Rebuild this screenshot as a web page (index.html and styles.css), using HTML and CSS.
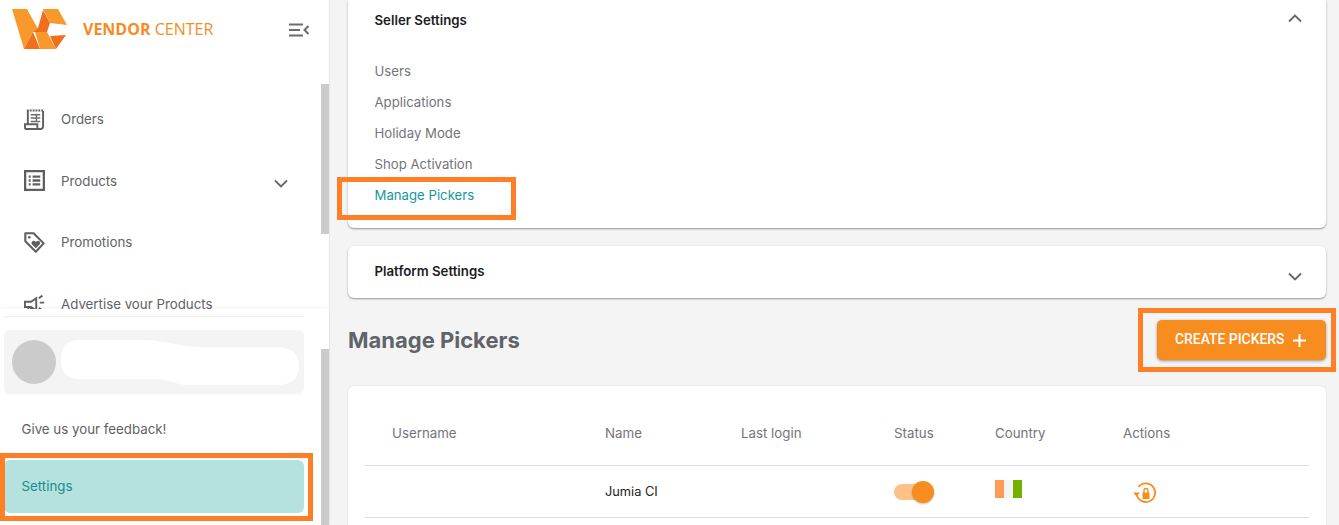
FILE: index.html
```html
<!DOCTYPE html>
<html lang="en">
<head>
<meta charset="utf-8">
<title>Vendor Center</title>
<link rel="stylesheet" href="styles.css">
</head>
<body>
<div class="app">
  <aside class="sidebar">
    <div class="brand">
      <svg class="logo" viewBox="0 0 55 40" aria-hidden="true">
        <polygon fill="#f8992c" points="0,0 15,0 26,20 21,23 12,40"/>
        <polygon fill="#f06f1a" points="21,23 12,40 28,40"/>
        <polygon fill="#f8992c" points="23,23 35,23 44,40 28,40"/>
        <polygon fill="#f06f1a" points="31,1 38,14 35,23 21,23 26,19"/>
        <polygon fill="#f8992c" points="31,0 46,0 55,16 38,14"/>
        <polygon fill="#f06f1a" points="38,27 54,26 44,40"/>
      </svg>
      <span class="brand-name"><b>VENDOR</b> CENTER</span>
      <svg class="collapse" viewBox="0 0 20 14" aria-hidden="true">
        <path d="M0 1.500h14M0 7h11M0 12.500h14M19.500 3l-4 4 4 4" fill="none" stroke="#6b6b6b" stroke-width="2"/>
      </svg>
    </div>
    <nav class="nav">
      <a class="nav-item">
        <svg class="nav-icon" viewBox="0 0 22 22"><path d="M4 2v14M20 2v16a3 3 0 0 1-3 3H3a2 2 0 0 1-2-2v-3h13v3a2 2 0 0 0 2 2" fill="none" stroke="#5f5f5f" stroke-width="2"/><path d="M3 1.500h18" fill="none" stroke="#5f5f5f" stroke-width="2" stroke-dasharray="2 1"/><path d="M7 6h10M7 9.500h10M7 13h10M13 5v9" fill="none" stroke="#6d6d6d" stroke-width="1.500"/></svg>
        <span>Orders</span>
      </a>
      <a class="nav-item">
        <svg class="nav-icon" viewBox="0 0 22 22"><path d="M1.200 1.200h19.600v19.600H1.200zM9 7h8M9 11h8M9 15h8M5 7h2M5 11h2M5 15h2" fill="none" stroke="#5f5f5f" stroke-width="2.400"/></svg>
        <span>Products</span>
        <svg class="chevron chevron-nav" viewBox="0 0 14 9"><path d="M1 1.500l6 6 6-6" fill="none" stroke="#666" stroke-width="1.800"/></svg>
      </a>
      <a class="nav-item">
        <svg class="nav-icon" viewBox="0 0 24 24"><path d="M1.500 1.500h9.500l11.500 11.500-9 9.500L1.500 10.500z" fill="none" stroke="#5f5f5f" stroke-width="2.400" stroke-linejoin="round"/><circle cx="6" cy="6" r="1.500" fill="#5f5f5f"/><path d="M13.500 18.500l-4.500-4.500a2.500 2.500 0 0 1 3.500-3.500l1 1 1-1a2.500 2.500 0 0 1 3.500 3.500z" fill="#5f5f5f"/></svg>
        <span>Promotions</span>
      </a>
      <a class="nav-item">
        <svg class="nav-icon" viewBox="0 0 24 22"><path d="M1 9h7l6-4v14l-6-4H1zM5 15v5h3v-5M18 10h5M17 5l4-3M17 16l4 3" fill="none" stroke="#5f5f5f" stroke-width="2.200"/></svg>
        <span>Advertise your Products</span>
      </a>
    </nav>
    <div class="sidebar-foot">
      <div class="foot-rule"></div>
      <div class="user">
        <span class="avatar"></span>
        <svg class="user-name" viewBox="0 0 238 45" aria-hidden="true"><path d="M18 0H80C100 0 120 7 140 7H215Q238 7 238 26Q238 45 215 45H130C110 45 115 39 90 39H18Q0 39 0 19Q0 0 18 0Z" fill="#fff"/></svg>
      </div>
      <a class="foot-link">Give us your feedback!</a>
      <a class="foot-link foot-link-active">Settings</a>
    </div>
    <span class="thumb thumb-top"></span>
    <span class="thumb thumb-bottom"></span>
    <span class="mark mark-settings"></span>
  </aside>

  <main class="main">
    <section class="card seller">
      <header class="card-head">
        <h2>Seller Settings</h2>
        <svg class="chevron chevron-up" viewBox="0 0 14 9"><path d="M1 7.500l6-6 6 6" fill="none" stroke="#666" stroke-width="1.800"/></svg>
      </header>
      <ul class="links">
        <li>Users</li>
        <li>Applications</li>
        <li>Holiday Mode</li>
        <li>Shop Activation</li>
        <li class="link-active">Manage Pickers</li>
      </ul>
    </section>
    <section class="card platform">
      <header class="card-head">
        <h2>Platform Settings</h2>
        <svg class="chevron" viewBox="0 0 14 9"><path d="M1 1.500l6 6 6-6" fill="none" stroke="#666" stroke-width="1.800"/></svg>
      </header>
    </section>
    <div class="title-row">
      <h1>Manage Pickers</h1>
      <button class="create">CREATE PICKERS
        <svg class="plus" viewBox="0 0 13 13"><path d="M6.500 0v13M0 6.500h13" stroke="#fff" stroke-width="2"/></svg>
      </button>
    </div>
    <section class="card table-card">
      <div class="row row-head">
        <span>Username</span><span>Name</span><span>Last login</span><span>Status</span><span>Country</span><span>Actions</span>
      </div>
      <div class="row row-body">
        <span></span>
        <span class="cell-name">Jumia CI</span>
        <span></span>
        <span><span class="toggle"><span class="knob"></span></span></span>
        <span class="flag"><i class="f-o"></i><i class="f-w"></i><i class="f-g"></i></span>
        <span class="action">
          <svg viewBox="0 0 24 22"><path d="M6.500 5A9.300 9.300 0 1 1 4.800 13" fill="none" stroke="#f78d1e" stroke-width="1.800"/><path d="M1 10.500h7L4.500 14.500z" fill="#f78d1e"/><path d="M10.500 10.500h7v6.500h-7z" fill="#f78d1e"/><path d="M12 11V8.500a2 2 0 0 1 4 0V11" fill="none" stroke="#f78d1e" stroke-width="1.400"/></svg>
        </span>
      </div>
    </section>
    <span class="mark mark-link"></span>
    <span class="mark mark-button"></span>
  </main>
</div>
</body>
</html>
```

FILE: styles.css
```css
* { box-sizing: border-box; }
html, body { margin: 0; height: 525px; overflow: hidden; }
body { font-family: Inter, "Liberation Sans", sans-serif; font-size: 13.300px; color: #5f6368; background: #f4f4f4; }
.app { display: flex; height: 525px; }

.sidebar { position: relative; flex: 0 0 330px; height: 525px; background: #fff; display: flex; flex-direction: column; border-right: 1px solid #e8e8e8; }
.brand { flex: 0 0 58px; display: flex; align-items: center; padding: 0 0 0 12px; }
.logo { width: 55px; height: 40px; }
.brand-name { margin-left: 16px; font-family: "Open Sans", sans-serif; font-size: 16px; color: #f68b1f; }
.brand-name b { font-weight: 700; }
.collapse { width: 20px; height: 14px; margin-left: 76px; margin-top: 2px; }

.nav { flex: 0 0 251px; overflow: hidden; padding-top: 30.300px; }
.nav-item { display: flex; align-items: center; height: 61.500px; padding-left: 24px; padding-right: 41px; }
.nav-item span { flex: 1; margin-left: 16px; }
.nav-icon { width: 21px; height: 21px; flex: none; }
.chevron { width: 14px; height: 9px; flex: none; }
.chevron-nav { margin-top: 5px; }

.sidebar-foot { flex: 1; padding: 7px 25px 0 4px; box-shadow: 0 -2px 3px rgba(0,0,0,.03); position: relative; background: #fff; }
.foot-rule { height: 1px; background: #ececec; }
.user { height: 64px; margin-top: 13px; background: #f4f4f4; border-radius: 6px; display: flex; align-items: center; padding: 0 5px 0 8px; }
.avatar { width: 44px; height: 44px; border-radius: 50%; background: #cbcbcb; flex: none; }
.user-name { flex: 1; min-width: 0; height: 45px; margin-left: 5px; }
.foot-link { display: flex; align-items: center; height: 53px; margin-top: 9px; padding: 0 0 2px 17.500px; color: #5f5f5f; }
.foot-link-active { margin-top: 4px; background: #b5e1df; color: #14908e; border-radius: 6px; }

.thumb { position: absolute; right: 0; width: 8px; background: #cbcbcb; }
.thumb-top { top: 84px; height: 150px; }
.thumb-bottom { top: 349px; bottom: 0; }

.mark { position: absolute; border: 5px solid #ff7f27; pointer-events: none; }
.mark-settings { left: 0; top: 453px; width: 313px; height: 68px; }
.mark-link { left: 337px; top: 177px; width: 179px; height: 43px; }
.mark-button { left: 1138px; top: 308px; width: 198px; height: 64px; }

.main { flex: 1; min-width: 0; padding: 0 13px 0 18px; }
.card { background: #fff; border-radius: 0 0 6px 6px; box-shadow: 0 1px 2px rgba(0,0,0,.4); }
.card-head { display: flex; align-items: center; justify-content: space-between; padding: 0 24px 0 26.500px; height: 40px; }
.card-head h2 { margin: 0; font-size: 13.250px; font-weight: 600; color: #1c1c1e; }
.seller { height: 228px; }
.links { list-style: none; margin: 0; padding: 16px 0 0 26.500px; font-size: 13.200px; }
.links li { height: 31px; line-height: 31px; color: #74747a; }
.links .link-active { color: #14979e; }
.platform { margin-top: 18px; height: 52px; border-radius: 6px; }
.platform .card-head { height: 50px; }
.chevron-up { margin-top: -4px; }
.platform .chevron { margin-top: 10px; }

.title-row { display: flex; align-items: center; justify-content: space-between; height: 84px; margin-bottom: 4px; }
.title-row h1 { margin: 0; font-size: 22px; font-weight: 700; color: #606469; }
.create { display: flex; align-items: center; height: 40px; width: 169px; padding: 0 0 2px 18px; border: 0; border-radius: 5px; background: #f78d1e; color: #fff; font-family: Roboto, sans-serif; font-size: 13.900px; font-weight: 500; box-shadow: 0 1px 3px rgba(0,0,0,.4); }
.plus { width: 13px; height: 13px; margin: 2px 0 0 9px; flex: none; }

.table-card { height: 160px; border-radius: 6px; padding: 0 17px; box-shadow: 0 0 2px rgba(0,0,0,.12); }
.row { display: grid; grid-template-columns: 240px 136px 153px 101px 128px 1fr; border-bottom: 1px solid #ddd; }
.row-head { height: 80px; align-items: center; padding: 15px 0 0; color: #74747a; }
.row-head > span:first-child { padding-left: 27px; }
.row-body { height: 52px; align-items: center; }
.cell-name { color: #222; font-size: 12.800px; }
.toggle { display: block; position: relative; width: 40px; height: 16px; border-radius: 8px; background: #fbc187; }
.knob { position: absolute; right: 0; top: -3px; width: 22px; height: 22px; border-radius: 50%; background: #f78d1e; box-shadow: 0 1px 2px rgba(0,0,0,.25); }
.flag { display: flex; width: 27px; height: 18px; margin-top: -6px; }
.flag i { flex: 1; }
.f-o { background: #fd9b57; }
.f-w { background: #f4f4f4; }
.f-g { background: #75b000; }
.action svg { display: block; width: 24px; height: 22px; margin-left: 9px; margin-top: 3px; }
```
